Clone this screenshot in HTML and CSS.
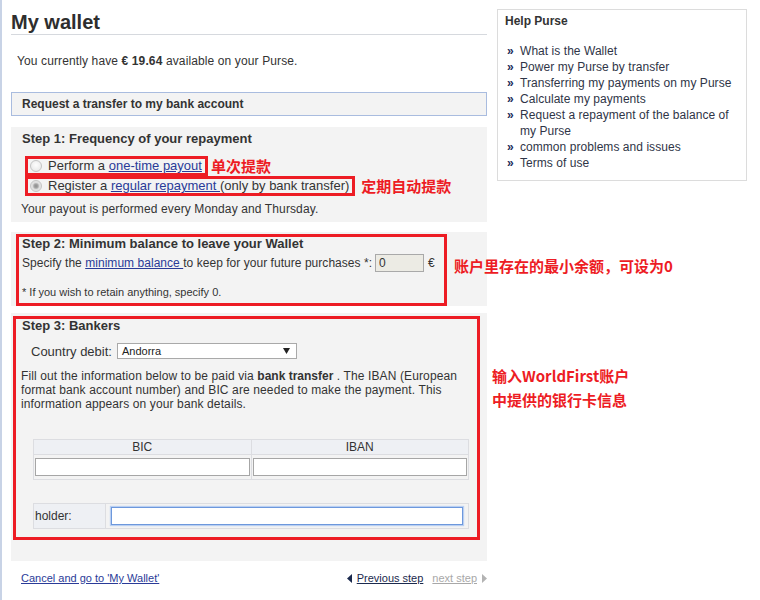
FILE: index.html
```html
<!DOCTYPE html>
<html lang="en">
<head>
    <meta charset="UTF-8">
    <meta name="viewport" content="width=device-width, initial-scale=1.0">
    <title>My wallet</title>
    <link rel="stylesheet" href="styles.css">
</head>
<body>

<div class="page">
    <div class="main">
        <h1 class="title">My wallet</h1>
        <p class="balance">You currently have <b>€ 19.64</b> available on your Purse.</p>

        <div class="request">Request a transfer to my bank account</div>

        <div class="step step-1">
            <h2>Step 1: Frequency of your repayment</h2>
            <div class="choices">
                <div class="choice">
                    <label class="mark"><input type="radio" name="freq"><span>Perform a <a href="#">one-time payout</a></span></label>
                    <span class="cn cn-1">单次提款</span>
                </div>
                <div class="choice">
                    <label class="mark"><input type="radio" name="freq" checked><span>Register a <a href="#">regular repayment </a>(only by bank transfer)</span></label>
                    <span class="cn cn-2">定期自动提款</span>
                </div>
            </div>
            <p class="payout">Your payout is performed every Monday and Thursday.</p>
        </div>

        <div class="step step-2">
            <div class="frame">
                <h2>Step 2: Minimum balance to leave your Wallet</h2>
                <div class="min-row">
                    <span>Specify the <a href="#">minimum balance </a>to keep for your future purchases *:</span>
                    <input type="text" value="0">
                    <span class="euro">€</span>
                </div>
                <p class="hint">* If you wish to retain anything, specify 0.</p>
            </div>
            <div class="cn cn-step2">账户里存在的最小余额，可设为0</div>
        </div>

        <div class="step step-3">
            <div class="frame">
                <h2>Step 3: Bankers</h2>
                <div class="country">
                    <span>Country debit:</span>
                    <div class="select">
                        <span>Andorra</span>
                        <svg width="7" height="6" viewBox="0 0 7 6"><path d="M0 0H7L3.5 6Z" fill="#222"/></svg>
                    </div>
                </div>
                <p class="info">Fill out the information below to be paid via <b>bank transfer</b> . The IBAN (European format bank account number) and BIC are needed to make the payment. This information appears on your bank details.</p>

                <table class="bank">
                    <tr>
                        <th>BIC</th>
                        <th>IBAN</th>
                    </tr>
                    <tr>
                        <td><input type="text"></td>
                        <td><input type="text"></td>
                    </tr>
                </table>

                <table class="holder">
                    <tr>
                        <th>holder:</th>
                        <td><input type="text" class="focus"></td>
                    </tr>
                </table>
            </div>
            <div class="cn cn-step3">输入WorldFirst账户<br>中提供的银行卡信息</div>
        </div>

        <div class="footer">
            <a href="#" class="cancel">Cancel and go to 'My Wallet'</a>
            <div class="pager">
                <svg width="5" height="9" viewBox="0 0 5 9"><path d="M5 0V9L0 4.5Z" fill="#1b2a4e"/></svg>
                <a href="#" class="prev">Previous step</a>
                <a href="#" class="next">next step</a>
                <svg width="5" height="9" viewBox="0 0 5 9"><path d="M0 0V9L5 4.5Z" fill="#b3b3b3"/></svg>
            </div>
        </div>
    </div>

    <div class="help">
        <h3>Help Purse</h3>
        <ul>
            <li><a href="#">What is the Wallet</a></li>
            <li><a href="#">Power my Purse by transfer</a></li>
            <li><a href="#">Transferring my payments on my Purse</a></li>
            <li><a href="#">Calculate my payments</a></li>
            <li><a href="#">Request a repayment of the balance of my Purse</a></li>
            <li><a href="#">common problems and issues</a></li>
            <li><a href="#">Terms of use</a></li>
        </ul>
    </div>
</div>

</body>
</html>
```
FILE: styles.css
```css
html, body {
    margin: 0;
    padding: 0;
}
body {
    font-family: "Liberation Sans", Arial, sans-serif;
    font-size: 12px;
    color: #333;
    background-color: #fff;
}
a {
    color: #2a3b98;
}
.page {
    display: flex;
    align-items: flex-start;
    gap: 10px;
    min-height: 600px;
    box-sizing: border-box;
    border-left: 2px solid #c8d3e6;
    padding-left: 9px;
}
.main {
    width: 476px;
    padding-top: 10px;
}
.title {
    margin: 0;
    font-size: 20px;
    line-height: 24px;
    font-weight: bold;
    color: #2e2e2e;
    border-bottom: 1px solid #d6d9de;
}
.balance {
    margin: 19px 0 0 6px;
    line-height: 14px;
    letter-spacing: 0.12px;
}
.request {
    margin-top: 24px;
    border: 1px solid #a9bcdf;
    background-color: #f3f3f3;
    padding: 4px 10px;
    font-weight: bold;
    line-height: 14px;
}

/* steps */
.step {
    position: relative;
    background-color: #f3f3f3;
    margin-top: 10px;
}
.step h2 {
    margin: 0;
    font-size: 13px;
    line-height: 14px;
    font-weight: bold;
    color: #333;
}
.frame {
    box-sizing: border-box;
    border: 3px solid #ed1c24;
}
.cn {
    font-family: "Noto Sans CJK SC", sans-serif;
    font-size: 15px;
    font-weight: bold;
    color: #ed1c24;
    white-space: nowrap;
}

.step-1 {
    margin-top: 11px;
    padding: 5px 10px 6px 10px;
}
.step-1 h2 {
    padding-left: 1px;
}
.choices {
    margin: 10px 0 0 4px;
}
.choice {
    display: flex;
    align-items: center;
}
.mark {
    display: flex;
    align-items: center;
    border: 3px solid #ed1c24;
    padding: 0 3px 0 2px;
    font-size: 13px;
    line-height: 14px;
}
.mark input {
    appearance: none;
    -webkit-appearance: none;
    width: 12px;
    height: 12px;
    margin: 0 6px 0 0;
    border: 1px solid #c4c4c4;
    border-radius: 50%;
    background: radial-gradient(circle at 50% 40%, #fdfdfd 0, #e4e4e4 100%);
    box-sizing: border-box;
}
.mark input:checked {
    background: radial-gradient(circle at 50% 50%, #8c8c8c 0, #a4a4a4 2px, #dcdcdc 3.5px, #f0f0f0 100%);
}
.cn-1 {
    margin-left: 3px;
    line-height: 18px;
}
.cn-2 {
    margin-left: 6px;
    line-height: 18px;
}
.payout {
    margin: 6px 0 0;
    line-height: 14px;
    letter-spacing: 0.12px;
}

.step-2 {
    padding-top: 2px;
}
.step-2 .frame {
    width: 431px;
    margin: 0 0 -3px 5px;
    padding: 0 0 4px 3px;
}
.min-row {
    display: flex;
    align-items: center;
    height: 18px;
    margin-top: 3px;
    letter-spacing: 0.04px;
}
.min-row input {
    width: 49px;
    height: 18px;
    box-sizing: border-box;
    margin: 0 0 0 3px;
    padding: 0 3px;
    border: 1px solid #a9a9a9;
    background-color: #ecebe4;
    font-family: "Liberation Sans", Arial, sans-serif;
    font-size: 12px;
    color: #333;
}
.euro {
    margin-left: 4px;
}
.hint {
    margin: 14px 0 0;
    font-size: 11px;
    line-height: 13px;
}
.cn-step2 {
    position: absolute;
    left: 443px;
    top: 24px;
    line-height: 20px;
}

.step-3 {
    padding: 3px 0 21px 2px;
}
.step-3 .frame {
    width: 467px;
    padding: 0 8px 8px 5px;
}
.step-3 h2 {
    padding-left: 1px;
}
.country {
    display: flex;
    align-items: center;
    gap: 5px;
    height: 16px;
    margin: 10px 0 0 10px;
    font-size: 13px;
}
.select {
    display: flex;
    align-items: center;
    justify-content: space-between;
    width: 180px;
    height: 16px;
    box-sizing: border-box;
    border: 1px solid #a9a9a9;
    background-color: #fff;
    padding: 0 6px 0 4px;
    font-size: 11px;
    color: #222;
}
.info {
    margin: 10px 0 0;
    line-height: 14px;
    letter-spacing: 0.12px;
}
.info b {
    letter-spacing: 0;
}
.bank, .holder {
    border-collapse: collapse;
    width: 436px;
    margin-left: 12px;
}
.bank {
    margin-top: 28px;
}
.holder {
    margin-top: 23px;
}
.bank th, .bank td, .holder th, .holder td {
    border: 1px solid #dcdde1;
}
.bank th {
    width: 50%;
    height: 14px;
    padding: 0;
    font-weight: normal;
    line-height: 14px;
    background-color: #eef0f4;
}
.bank td {
    padding: 3px 1px;
}
.holder th {
    width: 70px;
    padding: 0 0 0 1px;
    text-align: left;
    font-weight: normal;
    background-color: #eef0f4;
}
.holder td {
    padding: 3px 5px;
}
.bank input, .holder input {
    display: block;
    width: 100%;
    height: 18px;
    box-sizing: border-box;
    margin: 0;
    border: 1px solid #a6a6a6;
    background-color: #fff;
}
.holder input.focus {
    border-color: #6d98dc;
    box-shadow: 0 0 1px 1px #b9cff2;
}
.cn-step3 {
    position: absolute;
    left: 481px;
    top: 51px;
    line-height: 24px;
}

/* footer */
.footer {
    display: flex;
    justify-content: space-between;
    align-items: center;
    margin-top: 11px;
    padding-left: 10px;
    font-size: 11px;
    line-height: 13px;
}
.pager {
    display: flex;
    align-items: center;
}
.prev {
    margin-left: 5px;
    color: #1b2a4e;
}
.next {
    margin: 0 5px 0 9px;
    color: #a8a8a8;
}

/* help box */
.help {
    width: 250px;
    box-sizing: border-box;
    margin-top: 9px;
    border: 1px solid #dcdcdc;
    padding: 3px 8px 9px 7px;
}
.help h3 {
    margin: 0;
    font-size: 12px;
    line-height: 16px;
    font-weight: bold;
    color: #333;
}
.help ul {
    list-style: none;
    margin: 14px 0 0;
    padding: 0 0 0 2px;
}
.help li {
    display: flex;
    line-height: 16px;
    letter-spacing: 0.05px;
}
.help li::before {
    content: "»";
    flex: none;
    width: 13px;
    font-weight: bold;
    color: #1c2c58;
}
.help li a {
    color: #2f3547;
    text-decoration: none;
}
```
